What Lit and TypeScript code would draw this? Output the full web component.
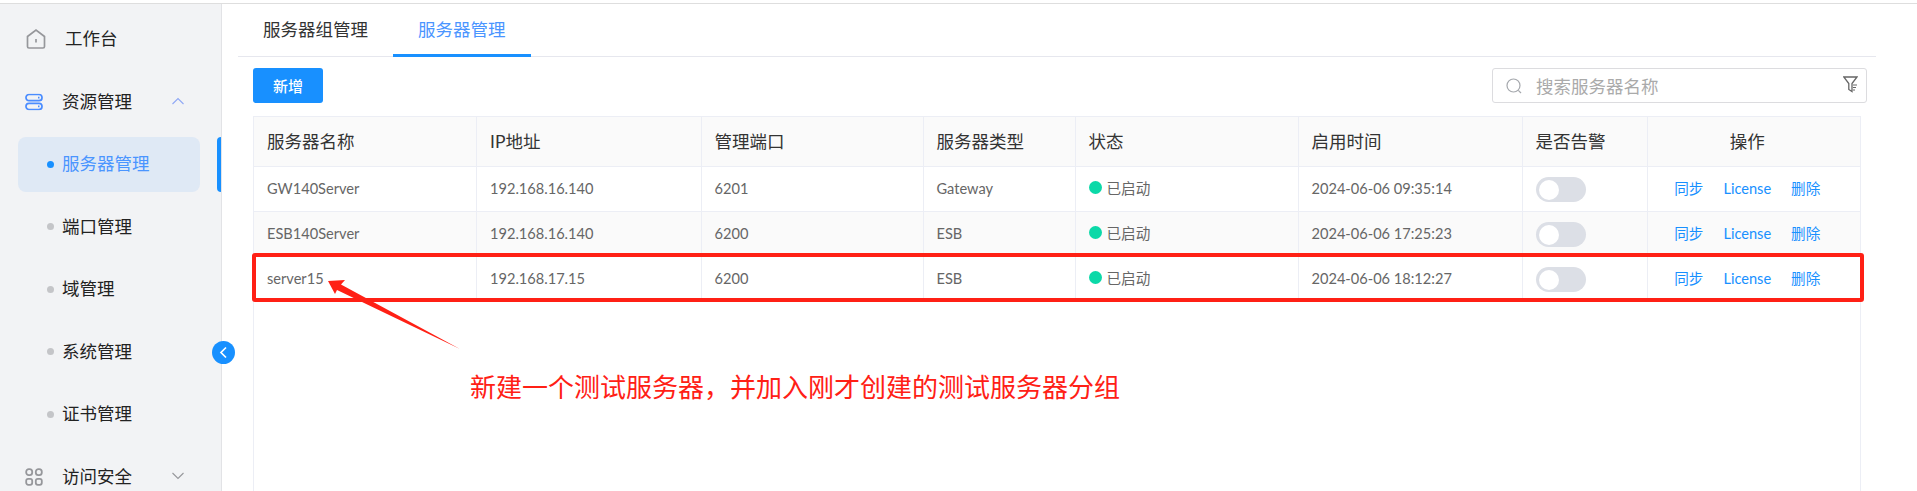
import { LitElement, html, css } from "lit";
import { customElement } from "lit/decorators.js";

const rows = [
  ["GW140Server", "192.168.16.140", "6201", "Gateway", "2024-06-06 09:35:14"],
  ["ESB140Server", "192.168.16.140", "6200", "ESB", "2024-06-06 17:25:23"],
  ["server15", "192.168.17.15", "6200", "ESB", "2024-06-06 18:12:27"],
];
const heads = ["服务器名称", "IP地址", "管理端口", "服务器类型", "状态", "启用时间", "是否告警"];

@customElement("app-root")
export class AppRoot extends LitElement {
  static styles = css`
    :host {
      display: block;
      position: relative;
      width: 1917px;
      height: 491px;
      overflow: hidden;
      background: #fff;
      font-family: "Lato", "Noto Sans CJK SC", sans-serif;
      --blue: #1890ff;
      --line: #eceef5;
    }
    .frame { margin-top: 3px; height: 488px; border-top: 1px solid #dedede; box-sizing: border-box; display: flex; }
    .side {
      width: 222px; flex: none; box-sizing: border-box; background: #f2f3f5;
      border-right: 1px solid #e2e3e6; padding-top: 4px; font-size: 17.5px; color: #222; position: relative;
    }
    .item { height: 62.5px; box-sizing: border-box; padding-bottom: 3px; display: flex; align-items: center; position: relative; }
    .item .ico { position: absolute; left: 25px; top: 50%; transform: translateY(-50%); display: block; }
    .item.top { padding-left: 62px; }
    .item.home { padding-left: 65px; }
    .chev { position: absolute; left: 171px; top: 50%; margin-top: -1px; transform: translateY(-50%); display: block; }
    .sub { padding-left: 62px; }
    .sub .dot { position: absolute; left: 47px; top: 50%; margin-top: -3.5px; width: 7px; height: 7px; border-radius: 50%; background: #c4c5c8; }
    .sub.on { color: #4a95ff; }
    .sub.on .dot { background: var(--blue); }
    .sub.on .bg { position: absolute; left: 18px; width: 182px; top: 4px; bottom: 4px; border-radius: 8px; background: #dfe9f5; }
    .sub.on .bar { position: absolute; right: 0; width: 4px; top: 4px; bottom: 4px; border-radius: 5px 0 0 5px; background: var(--blue); }
    .sub .t { position: relative; }
    .main { flex: 1; padding-left: 16px; min-width: 0; display: flex; flex-direction: column; }
    .tabs { display: flex; width: 1638px; height: 53px; box-sizing: border-box; border-bottom: 1px solid #e6e7ee; font-size: 17.5px; color: #333; }
    .tab { padding: 0 25px; line-height: 52px; height: 52px; box-sizing: border-box; }
    .tab.on { color: #4a95ff; border-bottom: 3px solid var(--blue); height: 53px; margin-bottom: -1px; }
    .tools { display: flex; justify-content: space-between; padding: 11px 50px 0 15px; }
    .btn { width: 70px; height: 35px; border-radius: 3px; background: var(--blue); color: #fff; font-size: 15px; font-weight: 500; display: flex; align-items: center; justify-content: center; }
    .search { width: 375px; height: 35px; box-sizing: border-box; border: 1px solid #dcdcdf; border-radius: 3px; display: flex; align-items: center; font-size: 17.5px; color: #aaa; padding-left: 13px; position: relative; }
    .search svg.s { margin-right: 14px; flex: none; }
    .search svg.f { position: absolute; right: 8px; top: 7px; }
    .table { margin: 13px 0 0 15px; width: 1608px; flex: 1; box-sizing: border-box; border: solid var(--line); border-width: 1px 1px 0 1px; }
    .row { display: grid; grid-template-columns: 223px 224.5px 222px 152px 223px 224px 125px 1fr; height: 45px; border-bottom: 1px solid var(--line); box-sizing: border-box; font-size: 14.6px; color: #666; }
    .row.head { height: 49.5px; background: #fafafa; font-size: 17.5px; color: #333; }
    .row.head .c { padding-bottom: 2px; }
    .row.alt { background: #fafafa; }
    .c { display: flex; align-items: center; padding: 0 0 0 13px; border-right: 1px solid var(--line); min-width: 0; white-space: nowrap; }
    .c:last-child { border-right: 0; }
    .c.center { padding-left: 0; padding-right: 13px; justify-content: center; }
    .c.plain { padding-top: 2px; }
    .c.status { padding-bottom: 2px; }
    .state { width: 13px; height: 13px; border-radius: 50%; background: #0bd9a8; margin-right: 5px; }
    .sw { width: 50px; height: 25px; border-radius: 13px; background: #dcdfe6; position: relative; }
    .sw::after { content: ""; position: absolute; left: 3px; top: 2.5px; width: 20px; height: 20px; border-radius: 50%; background: #fff; }
    .ops { display: flex; align-items: baseline; gap: 20px; color: var(--blue); }
    .collapse { position: absolute; left: 212px; top: 341px; width: 23px; height: 23px; border-radius: 50%; background: var(--blue); display: flex; align-items: center; justify-content: center; }
    .mark { position: absolute; left: 252px; top: 253px; width: 1612px; height: 49px; box-sizing: border-box; border: 4px solid #ff2015; border-radius: 3px; }
    .arrow { position: absolute; left: 320px; top: 270px; }
    .note { position: absolute; left: 470px; top: 367px; font-size: 26px; line-height: 38px; color: #ff2015; white-space: nowrap; font-family: "Noto Sans CJK SC", sans-serif; }
  `;

  private chevron(up: boolean, color: string) {
    return html`<svg class="chev" width="14" height="9" viewBox="0 0 14 9" fill="none" stroke=${color} stroke-width="1.1">
      <path d=${up ? "M1.5 7.5 L7 2 L12.5 7.5" : "M1.5 1.5 L7 7 L12.5 1.5"}/></svg>`;
  }

  private sub(name: string, on = false) {
    return html`<div class="item sub ${on ? "on" : ""}">
      ${on ? html`<i class="bg"></i><i class="bar"></i>` : ""}
      <i class="dot"></i><span class="t">${name}</span></div>`;
  }

  render() {
    return html`
      <div class="frame">
        <aside class="side">
          <div class="item home">
            <svg class="ico" style="left:26px" width="20" height="21" viewBox="0 0 20 21" fill="none" stroke="#96979b" stroke-width="1.7">
              <path d="M1.5 8 L10 1.5 L18.5 8 V18 Q18.5 19.5 17 19.5 H3 Q1.5 19.5 1.5 18 Z"/><path d="M10 10.5 V14"/>
            </svg>工作台
          </div>
          <div class="item top">
            <svg class="ico" width="18" height="17" viewBox="0 0 18 17" fill="none" stroke="#4a8cff" stroke-width="1.7">
              <rect x="1" y="1" width="16" height="6.2" rx="3"/><rect x="1" y="9.8" width="16" height="6.2" rx="3"/>
              <path d="M13 4.1h1.5M13 12.9h1.5"/>
            </svg>资源管理${this.chevron(true, "#8fa8f5")}
          </div>
          ${this.sub("服务器管理", true)}
          ${this.sub("端口管理")}
          ${this.sub("域管理")}
          ${this.sub("系统管理")}
          ${this.sub("证书管理")}
          <div class="item top">
            <svg class="ico" width="18" height="18" viewBox="0 0 18 18" fill="none" stroke="#96979b" stroke-width="1.8">
              <rect x="1.2" y="1.2" width="6" height="6" rx="2.6"/><rect x="10.8" y="1.2" width="6" height="6" rx="2.6"/>
              <rect x="1.2" y="10.8" width="6" height="6" rx="2"/><rect x="10.8" y="10.8" width="6" height="6" rx="2"/>
            </svg>访问安全${this.chevron(false, "#96979b")}
          </div>
        </aside>
        <main class="main">
          <div class="tabs">
            <div class="tab">服务器组管理</div>
            <div class="tab on">服务器管理</div>
          </div>
          <div class="tools">
            <div class="btn">新增</div>
            <div class="search">
              <svg class="s" width="16" height="16" viewBox="0 0 16 16" fill="none" stroke="#a5a8ad" stroke-width="1.2">
                <circle cx="7.5" cy="7.5" r="6.5"/><path d="M12.3 12.3 L15 15"/>
              </svg>搜索服务器名称
              <svg class="f" width="15" height="17" viewBox="0 0 15 17" fill="none" stroke="#666" stroke-width="1.3">
                <path d="M0.8 1 H14 L9 7.5 V15.5 L5.8 13.5 V7.5 Z"/><path d="M10 9h4M10 11.5h3M10 14h2" stroke-width="1"/>
              </svg>
            </div>
          </div>
          <div class="table">
            <div class="row head">
              ${heads.map((h) => html`<div class="c">${h}</div>`)}
              <div class="c center">操作</div>
            </div>
            ${rows.map((r, i) => html`
              <div class="row ${i === 1 ? "alt" : ""}">
                <div class="c">${r[0]}</div>
                <div class="c">${r[1]}</div>
                <div class="c">${r[2]}</div>
                <div class="c">${r[3]}</div>
                <div class="c status"><i class="state"></i>已启动</div>
                <div class="c">${r[4]}</div>
                <div class="c plain"><div class="sw"></div></div>
                <div class="c center status"><div class="ops"><span>同步</span><span>License</span><span>删除</span></div></div>
              </div>`)}
          </div>
        </main>
      </div>
      <div class="collapse">
        <svg width="9" height="13" viewBox="0 0 9 13" fill="none" stroke="#fff" stroke-width="1.7"><path d="M7 1.5 L2 6.5 L7 11.5"/></svg>
      </div>
      <div class="mark"></div>
      <svg class="arrow" width="150" height="85" viewBox="0 0 150 85">
        <path fill="#ff2015" d="M8 11 L25 10 L21 14.5 L140 79 L17 20 L15 24 Z"/>
      </svg>
      <div class="note">新建一个测试服务器，并加入刚才创建的测试服务器分组</div>
    `;
  }
}
